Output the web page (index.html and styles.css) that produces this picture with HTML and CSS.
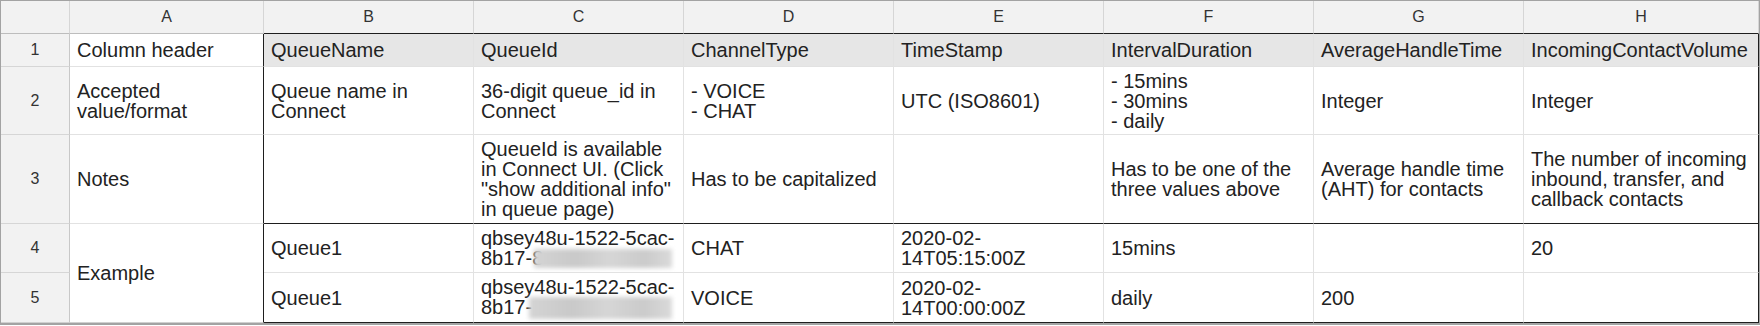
FILE: index.html
```html
<!DOCTYPE html>
<html lang="en">
<head>
  <meta charset="UTF-8">
  <title>Queue data format</title>
  <link rel="stylesheet" href="styles.css">
</head>
<body>

  <!-- sheet -->
  <div class="sheet">
    <!-- column letters -->
    <div class="corner"></div>
    <div class="col-head">A</div>
    <div class="col-head in-box">B</div>
    <div class="col-head in-box">C</div>
    <div class="col-head in-box">D</div>
    <div class="col-head in-box">E</div>
    <div class="col-head in-box">F</div>
    <div class="col-head in-box">G</div>
    <div class="col-head in-box">H</div>

    <!-- row 1 -->
    <div class="row-head">1</div>
    <div class="cell label">Column header</div>
    <div class="cell field">QueueName</div>
    <div class="cell field">QueueId</div>
    <div class="cell field">ChannelType</div>
    <div class="cell field">TimeStamp</div>
    <div class="cell field">IntervalDuration</div>
    <div class="cell field">AverageHandleTime</div>
    <div class="cell field last">IncomingContactVolume</div>

    <!-- row 2 -->
    <div class="row-head">2</div>
    <div class="cell label"><div>Accepted<br>value/format</div></div>
    <div class="cell"><div>Queue name in<br>Connect</div></div>
    <div class="cell"><div>36-digit queue_id in<br>Connect</div></div>
    <div class="cell"><div>- VOICE<br>- CHAT</div></div>
    <div class="cell">UTC (ISO8601)</div>
    <div class="cell"><div>- 15mins<br>- 30mins<br>- daily</div></div>
    <div class="cell">Integer</div>
    <div class="cell last">Integer</div>

    <!-- row 3 -->
    <div class="row-head">3</div>
    <div class="cell label">Notes</div>
    <div class="cell note"></div>
    <div class="cell note"><div>QueueId is available<br>in Connect UI. (Click<br>"show additional info"<br>in queue page)</div></div>
    <div class="cell note">Has to be capitalized</div>
    <div class="cell note"></div>
    <div class="cell note"><div>Has to be one of the<br>three values above</div></div>
    <div class="cell note"><div>Average handle time<br>(AHT) for contacts</div></div>
    <div class="cell note last"><div>The number of incoming<br>inbound, transfer, and<br>callback contacts</div></div>

    <!-- row 4 -->
    <div class="row-head">4</div>
    <div class="cell label example">Example</div>
    <div class="cell">Queue1</div>
    <div class="cell"><div>qbsey48u-1522-5cac-<br>8b17-8<span class="redacted"></span></div></div>
    <div class="cell">CHAT</div>
    <div class="cell"><div>2020-02-<br>14T05:15:00Z</div></div>
    <div class="cell">15mins</div>
    <div class="cell"></div>
    <div class="cell last">20</div>

    <!-- row 5 -->
    <div class="row-head bottom">5</div>
    <div class="cell bottom">Queue1</div>
    <div class="cell bottom"><div>qbsey48u-1522-5cac-<br>8b17-<span class="redacted r2"></span></div></div>
    <div class="cell bottom">VOICE</div>
    <div class="cell bottom"><div>2020-02-<br>14T00:00:00Z</div></div>
    <div class="cell bottom">daily</div>
    <div class="cell bottom">200</div>
    <div class="cell bottom last"></div>
  </div>

</body>
</html>
```

FILE: styles.css
```css
body {
  margin: 0;
  padding: 0;
  background: #fff;
  font-family: "Liberation Sans", Arial, sans-serif;
  color: #222;
}
.sheet {
  display: grid;
  grid-template-columns: 69px 194px 210px 210px 210px 210px 210px 210px 235px;
  grid-template-rows: 33px 33px 68px 89px 49px 50px;
  width: 1758px;
  border: 1px solid #a3a3a3;
  border-bottom-width: 2px;
}
.corner,
.col-head,
.row-head {
  background: #f2f2f2;
  color: #333;
  font-size: 16px;
  display: flex;
  align-items: center;
  justify-content: center;
  border-right: 1px solid #d6d6d6;
  border-bottom: 1px solid #d6d6d6;
}
.corner,
.col-head {
  border-bottom-color: #bdbdbd;
}
.col-head.in-box {
  border-bottom-color: #1e1e1e;
}
.col-head:last-child {
  border-right: none;
}
.row-head {
  border-right-color: #c8c8c8;
}
.cell {
  font-size: 20px;
  line-height: 20px;
  display: flex;
  align-items: center;
  padding: 0 6px 0 7px;
  border-right: 1px solid #e2e2e2;
  border-bottom: 1px solid #e2e2e2;
  white-space: nowrap;
  overflow: hidden;
}
.field {
  background: #e6e6e6;
}
.label {
  border-right-color: #1e1e1e;
}
.last {
  border-right-color: #1e1e1e;
}
.note {
  border-bottom-color: #1e1e1e;
}
.example {
  grid-row: span 2;
  border-bottom-color: #d0d0d0;
}
.cell.bottom {
  border-bottom-color: #1e1e1e;
}
.row-head.bottom {
  border-bottom-color: #d0d0d0;
}
/* blurred part of the queue id */
.redacted {
  display: inline-block;
  width: 138px;
  height: 19px;
  margin-left: -9px;
  vertical-align: -3px;
  background: linear-gradient(90deg, #d4d4d4, #c9c9c9 30%, #d6d6d6 55%, #cbcbcb 80%, #dadada);
  filter: blur(2px);
}
.redacted.r2 {
  width: 143px;
  height: 22px;
  margin-left: -3px;
  vertical-align: -5px;
}
```
